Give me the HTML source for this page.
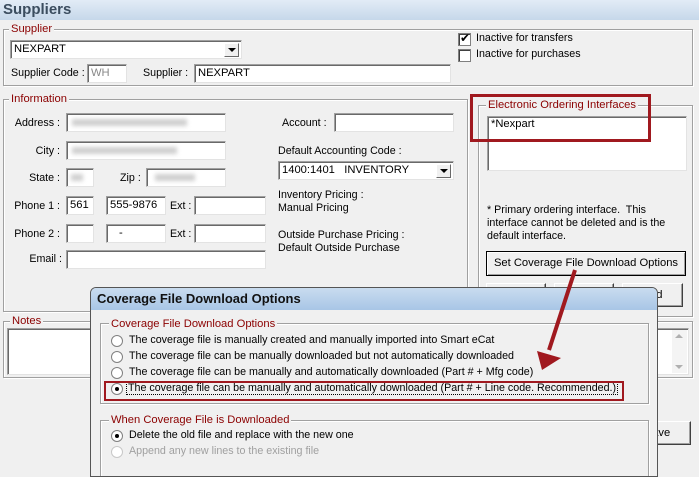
<!DOCTYPE html>
<html><head><meta charset="utf-8"><style>
*{box-sizing:border-box;margin:0;padding:0}
body{width:699px;height:467px;overflow:hidden;background:#f0f0f0;font-family:"Liberation Sans",sans-serif;font-size:10.7px;color:#000;position:relative}
.a{position:absolute;white-space:nowrap}
.g{position:absolute;border:1px solid #a0a0a0;box-shadow:1px 1px 0 #fff inset,1px 1px 0 #fff}
.lg{position:absolute;background:#f0f0f0;color:#8b0000;padding:0 2px;font-size:11.2px;line-height:12px}
.in{position:absolute;background:#fff;border:1px solid #a0a0a0;border-right-color:#e3e3e3;border-bottom-color:#e3e3e3;box-shadow:inset 1px 1px 0 #696969;padding:1px 3px;line-height:14px;font-size:11.2px}
.blur{position:absolute;background:#cfcfcf;filter:blur(2px);height:7px}
.dd{position:absolute;right:2px;top:2px;width:15px;height:14px;background:#f0f0f0;border:1px solid #fff;border-right-color:#696969;border-bottom-color:#696969}
.dd:after{content:"";position:absolute;left:3px;top:4px;border:4px solid transparent;border-top:4px solid #000;border-bottom:0}
.cb{position:absolute;width:13px;height:13px;background:#fff;border:1px solid #808080;box-shadow:inset 1px 1px 0 #404040}
.rd{position:absolute;width:12px;height:12px;border-radius:50%;background:#fff;border:1px solid #808080}
.rd.on:after{content:"";position:absolute;left:3px;top:3px;width:4px;height:4px;border-radius:50%;background:#000}
.btn{position:absolute;background:#f0f0f0;border:1px solid #fff;border-right-color:#404040;border-bottom-color:#404040;box-shadow:inset -1px -1px 0 #a0a0a0;text-align:center;line-height:22px;font-size:11.2px}
.r{text-align:right}
</style></head><body>
<div class="a" style="left:0;top:0;width:699px;height:20px;background:linear-gradient(#e2ecf6,#c6d8ea)"></div>
<div class="a" style="left:3px;top:1px;font-weight:bold;font-size:15px;color:#3b4d5f">Suppliers</div>

<div class="g" style="left:3px;top:29px;width:690px;height:57px"></div>
<div class="lg" style="left:9px;top:23px">Supplier</div>
<div class="in" style="left:10px;top:40px;width:232px;height:19px">NEXPART<div class="dd"></div></div>
<div class="a" style="left:11px;top:67px">Supplier Code :</div>
<div class="in" style="left:87px;top:64px;width:40px;height:19px;color:#888">WH</div>
<div class="a" style="left:143px;top:67px">Supplier :</div>
<div class="in" style="left:194px;top:64px;width:257px;height:19px">NEXPART</div>
<div class="cb" style="left:458px;top:33px"><span style="position:absolute;left:1px;top:-3px;font-size:12px">✔</span></div>
<div class="a" style="left:476px;top:32px">Inactive for transfers</div>
<div class="cb" style="left:458px;top:49px"></div>
<div class="a" style="left:476px;top:48px">Inactive for purchases</div>

<div class="g" style="left:3px;top:99px;width:465px;height:213px"></div>
<div class="lg" style="left:9px;top:93px">Information</div>
<div class="a r" style="left:0;width:60px;top:117px">Address :</div>
<div class="in" style="left:66px;top:113px;width:160px;height:19px"><div class="blur" style="left:5px;top:5px;width:115px"></div></div>
<div class="a r" style="left:0;width:60px;top:145px">City :</div>
<div class="in" style="left:66px;top:141px;width:160px;height:19px"><div class="blur" style="left:5px;top:5px;width:105px"></div></div>
<div class="a r" style="left:0;width:60px;top:172px">State :</div>
<div class="in" style="left:66px;top:168px;width:28px;height:19px"><div class="blur" style="left:4px;top:5px;width:12px"></div></div>
<div class="a" style="left:120px;top:172px">Zip :</div>
<div class="in" style="left:146px;top:168px;width:80px;height:19px"><div class="blur" style="left:8px;top:5px;width:40px"></div></div>
<div class="a r" style="left:0;width:60px;top:200px">Phone 1 :</div>
<div class="in" style="left:66px;top:196px;width:28px;height:19px">561</div>
<div class="in" style="left:106px;top:196px;width:60px;height:19px">555-9876</div>
<div class="a" style="left:170px;top:200px">Ext :</div>
<div class="in" style="left:194px;top:196px;width:72px;height:19px"></div>
<div class="a r" style="left:0;width:60px;top:228px">Phone 2 :</div>
<div class="in" style="left:66px;top:224px;width:28px;height:19px"></div>
<div class="in" style="left:106px;top:224px;width:60px;height:19px;padding-left:12px">-</div>
<div class="a" style="left:170px;top:228px">Ext :</div>
<div class="in" style="left:194px;top:224px;width:72px;height:19px"></div>
<div class="a r" style="left:0;width:62px;top:253px">Email :</div>
<div class="in" style="left:66px;top:250px;width:200px;height:19px"></div>
<div class="a" style="left:282px;top:117px">Account :</div>
<div class="in" style="left:334px;top:113px;width:120px;height:19px"></div>
<div class="a" style="left:278px;top:145px">Default Accounting Code :</div>
<div class="in" style="left:278px;top:161px;width:176px;height:19px">1400:1401&nbsp;&nbsp;&nbsp;INVENTORY<div class="dd"></div></div>
<div class="a" style="left:278px;top:189px;line-height:13px">Inventory Pricing :<br>Manual Pricing</div>
<div class="a" style="left:278px;top:229px;line-height:13px">Outside Purchase Pricing :<br>Default Outside Purchase</div>

<div class="g" style="left:478px;top:105px;width:215px;height:212px"></div>
<div class="lg" style="left:486px;top:99px">Electronic Ordering Interfaces</div>
<div class="in" style="left:487px;top:116px;width:200px;height:55px;line-height:13px">*Nexpart</div>
<div class="a" style="left:470px;top:94px;width:181px;height:48px;border:3px solid #a0191f"></div>
<div class="a" style="left:487px;top:204px;line-height:13px">* Primary ordering interface.&nbsp; This<br>interface cannot be deleted and is the<br>default interface.</div>
<div class="btn" style="left:486px;top:251px;width:200px;height:25px;border:1px solid #000;box-shadow:inset 1px 1px 0 #fff,inset -1px -1px 0 #a0a0a0">Set Coverage File Download Options</div>
<div class="btn" style="left:486px;top:283px;width:60px;height:24px"></div>
<div class="btn" style="left:554px;top:283px;width:60px;height:24px"></div>
<div class="btn" style="left:622px;top:283px;width:61px;height:24px">Add</div>

<div class="g" style="left:3px;top:321px;width:690px;height:57px"></div>
<div class="lg" style="left:10px;top:315px">Notes</div>
<div class="in" style="left:7px;top:328px;width:682px;height:47px"></div>
<div class="a" style="left:672px;top:330px;width:15px;height:43px;background:#f4f4f4"></div>
<div class="a" style="left:675px;top:334px;border:4px solid transparent;border-bottom:4px solid #b0b0b0;border-top:0"></div>
<div class="a" style="left:675px;top:365px;border:4px solid transparent;border-top:4px solid #b0b0b0;border-bottom:0"></div>
<div class="btn" style="left:624px;top:421px;width:67px;height:24px">Save</div>

<div class="a" style="left:90px;top:287px;width:568px;height:190px;background:#f0f0f0;border:1px solid #555;border-radius:6px 6px 0 0;overflow:hidden">
<div class="a" style="left:0;top:0;width:566px;height:22px;background:linear-gradient(#c9dcef,#a8c6e6)"></div>
<div class="a" style="left:6px;top:3px;font-weight:bold;font-size:13px;color:#111">Coverage File Download Options</div>
<div class="g" style="left:9px;top:35px;width:549px;height:81px"></div>
<div class="lg" style="left:18px;top:30px">Coverage File Download Options</div>
<div class="rd" style="left:20px;top:47px"></div><div class="a" style="left:38px;top:46px">The coverage file is manually created and manually imported into Smart eCat</div>
<div class="rd" style="left:20px;top:63px"></div><div class="a" style="left:38px;top:62px">The coverage file can be manually downloaded but not automatically downloaded</div>
<div class="rd" style="left:20px;top:79px"></div><div class="a" style="left:38px;top:78px">The coverage file can be manually and automatically downloaded (Part # + Mfg code)</div>
<div class="rd on" style="left:20px;top:95px"></div><div class="a" style="left:36px;top:94px;outline:1px dotted #000;padding:0 1px">The coverage file can be manually and automatically downloaded (Part # + Line code. Recommended.)</div>
<div class="a" style="left:13px;top:93px;width:520px;height:20px;border:2px solid #a0191f"></div>
<div class="g" style="left:9px;top:132px;width:549px;height:70px"></div>
<div class="lg" style="left:18px;top:126px">When Coverage File is Downloaded</div>
<div class="rd on" style="left:20px;top:142px"></div><div class="a" style="left:38px;top:141px">Delete the old file and replace with the new one</div>
<div class="rd" style="left:20px;top:158px;border-color:#c8c8c8"></div><div class="a" style="left:38px;top:157px;color:#a0a0a0">Append any new lines to the existing file</div>
</div>

<svg class="a" style="left:0;top:0" width="699" height="467"><line x1="575" y1="270" x2="549" y2="350" stroke="#a0191f" stroke-width="4"/><polygon points="542,370 537,351 561,358" fill="#a0191f"/></svg>
</body></html>
